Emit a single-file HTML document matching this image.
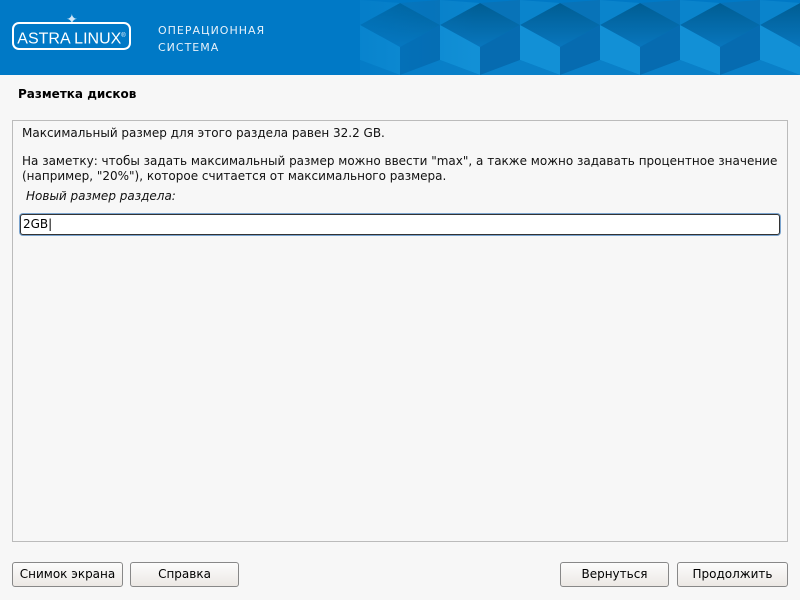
<!DOCTYPE html>
<html><head><meta charset="utf-8"><style>
body{margin:0;width:800px;height:600px;background:#f7f7f7;font-family:"DejaVu Sans","Liberation Sans",sans-serif;overflow:hidden;position:relative}
.hdr{position:absolute;left:0;top:0;width:800px;height:75px;background:#0079c6;overflow:hidden}
.logo{position:absolute;left:12px;top:22px;width:119px;height:28px;border:2px solid #fff;border-radius:7px;box-sizing:border-box;color:#fff;font-family:"Liberation Sans",sans-serif;font-size:16px;line-height:24px;text-align:center;white-space:nowrap}
.star{position:absolute;left:66px;top:13px;color:#cfe6f7;font-size:14px;line-height:14px}
.os{position:absolute;left:158px;top:22px;color:#e6f1fa;font-size:11px;letter-spacing:1px;line-height:17px}
.title{position:absolute;left:18px;top:87px;font-size:12px;font-weight:bold;color:#000}
.box{position:absolute;left:12px;top:120px;width:776px;height:422px;border:1px solid #bbb;box-sizing:border-box;background:#f7f7f7}
.t{position:absolute;left:22px;font-size:12px;color:#111;white-space:nowrap}
.inp{position:absolute;left:20px;top:214px;width:760px;height:21px;border:1px solid #333;border-radius:3px;box-sizing:border-box;background:#fff;font-size:12px;line-height:19px;padding-left:2px;box-shadow:0 0 0 1px #7aa4cf}
.btn{position:absolute;top:562px;height:25px;border:1px solid #888;border-radius:3px;box-sizing:border-box;background:linear-gradient(#fcfcfc,#ece8e4);font-size:12px;text-align:center;line-height:23px;color:#000}
</style></head><body>
<div class="hdr">
<svg width="800" height="75" style="position:absolute;left:0;top:0">
<defs><linearGradient id="g" x1="0" y1="0" x2="0" y2="1"><stop offset="0" stop-color="#005d93"/><stop offset="1" stop-color="#0876bd"/></linearGradient>
<linearGradient id="fade" x1="0" x2="1"><stop offset="0" stop-color="#0079c6" stop-opacity="1"/><stop offset="0.4" stop-color="#0079c6" stop-opacity="0"/></linearGradient></defs>
<g>
<g id="u"><polygon points="440,25 480,3 520,25 480,47" fill="url(#g)"/><polygon points="440,25 480,47 480,75 440,60" fill="#1290d6"/><polygon points="480,47 520,25 520,60 480,75" fill="#066bb0"/><polygon points="440,25 480,3 440,0" fill="#0a84cc"/><polygon points="480,3 520,25 520,0" fill="#0873b8"/><polygon points="440,60 480,75 440,75" fill="#0a80c8"/><polygon points="520,60 480,75 520,75" fill="#0a80c8"/></g>
<use href="#u" x="80"/><use href="#u" x="160"/><use href="#u" x="240"/><use href="#u" x="320"/><use href="#u" x="-80"/><use href="#u" x="-160"/>
</g>
<rect x="260" y="0" width="540" height="75" fill="url(#fade)"/>
<rect x="0" y="0" width="360" height="75" fill="#0079c6"/>
</svg>
<div class="star">✦</div>
<div class="logo">ASTRA LINUX<sup style="font-size:6px">®</sup></div>
<div class="os">ОПЕРАЦИОННАЯ<br>СИСТЕМА</div>
</div>
<div class="title">Разметка дисков</div>
<div class="box"></div>
<div class="t" style="top:126px">Максимальный размер для этого раздела равен 32.2 GB.</div>
<div class="t" style="top:154px">На заметку: чтобы задать максимальный размер можно ввести "max", а также можно задавать процентное значение</div>
<div class="t" style="top:169px">(например, "20%"), которое считается от максимального размера.</div>
<div class="t" style="top:189px;left:26px;font-style:italic">Новый размер раздела:</div>
<div class="inp">2GB|</div>
<div class="btn" style="left:12px;width:111px">Снимок экрана</div>
<div class="btn" style="left:130px;width:109px">Справка</div>
<div class="btn" style="left:560px;width:109px">Вернуться</div>
<div class="btn" style="left:677px;width:111px">Продолжить</div>
</body></html>
